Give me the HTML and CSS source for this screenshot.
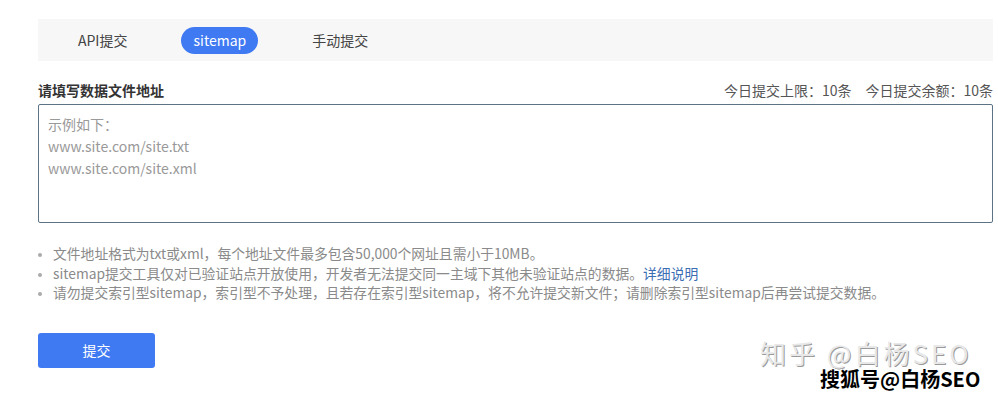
FILE: index.html
```html
<!DOCTYPE html>
<html lang="zh-CN">
<head>
<meta charset="utf-8">
<title>sitemap提交</title>
<link rel="stylesheet" href="styles.css">
</head>
<body>
<div class="page">
  <div class="tabs">
    <span class="tab">API提交</span>
    <span class="tab active">sitemap</span>
    <span class="tab">手动提交</span>
  </div>
  <div class="label-row">
    <span class="label">请填写数据文件地址</span>
    <span class="quota">今日提交上限：10条<span class="sep"></span>今日提交余额：10条</span>
  </div>
  <div class="textarea">
    <div class="ph">示例如下：</div>
    <div class="ph">www.site.com/site.txt</div>
    <div class="ph">www.site.com/site.xml</div>
  </div>
  <ul class="notes">
    <li>文件地址格式为txt或xml，每个地址文件最多包含50,000个网址且需小于10MB。</li>
    <li>sitemap提交工具仅对已验证站点开放使用，开发者无法提交同一主域下其他未验证站点的数据。<a class="link">详细说明</a></li>
    <li>请勿提交索引型sitemap，索引型不予处理，且若存在索引型sitemap，将不允许提交新文件；请删除索引型sitemap后再尝试提交数据。</li>
  </ul>
  <button class="submit">提交</button>
</div>
<div class="wm-zhihu">知乎 @白杨SEO</div>
<div class="wm-sohu">搜狐号@白杨SEO</div>
</body>
</html>
```
FILE: styles.css
```css
html, body {
  margin: 0;
  background: #fff;
}
body {
  font-family: "Noto Sans CJK SC", "Noto Sans", sans-serif;
  color: #333;
  width: 998px;
  height: 399px;
  overflow: hidden;
  position: relative;
}
.page {
  padding: 19px 5px 0 38px;
}
.tabs {
  height: 42px;
  background: #f7f7f7;
  display: flex;
  align-items: center;
  gap: 40px;
  padding-left: 26px;
}
.tab {
  height: 27px;
  line-height: 27px;
  padding: 0 14px;
  font-size: 14px;
  color: #444;
  border-radius: 14px;
}
.tab.active {
  background: #3f7af3;
  color: #fff;
  padding: 0 12px;
}
.label-row {
  display: flex;
  justify-content: space-between;
  align-items: center;
  height: 20px;
  margin-top: 19px;
  margin-bottom: 4px;
}
.label {
  font-size: 14px;
  font-weight: 600;
  color: #333;
}
.quota {
  font-size: 14px;
  color: #555;
}
.sep {
  display: inline-block;
  width: 14px;
}
.textarea {
  border: 1px solid #5b7385;
  border-radius: 2px;
  padding: 8px 9px 0;
  box-sizing: border-box;
  height: 119px;
}
.ph {
  font-size: 14px;
  line-height: 22px;
  color: #999;
}
.notes {
  margin: 21px 0 0;
  padding: 0 0 0 15px;
  font-size: 13.8px;
  line-height: 19.5px;
  color: #8a8a8a;
}
.notes li::marker {
  color: #aaa;
  font-size: 11px;
}
.link {
  color: #3a6db3;
}
.submit {
  display: block;
  margin-top: 30px;
  width: 117px;
  height: 35px;
  border: none;
  border-radius: 3px;
  background: #3f7af3;
  color: #fff;
  font-family: inherit;
  font-size: 14px;
}
.wm-zhihu {
  position: absolute;
  left: 760px;
  top: 339px;
  font-size: 26px;
  line-height: 28px;
  color: #e8e8e8;
  letter-spacing: 3px;
  text-shadow: 1px 1px 0 #9a9a9a, -1px 0 0 #fff;
  font-family: "Noto Sans CJK SC", sans-serif;
}
.wm-sohu {
  position: absolute;
  left: 820px;
  top: 367px;
  font-size: 20px;
  line-height: 24px;
  font-weight: 700;
  color: #000;
  font-family: "Noto Sans CJK SC", sans-serif;
  text-shadow: 1px 1px 0 #fff, -1px -1px 0 #fff, 1px -1px 0 #fff, -1px 1px 0 #fff;
}
```
